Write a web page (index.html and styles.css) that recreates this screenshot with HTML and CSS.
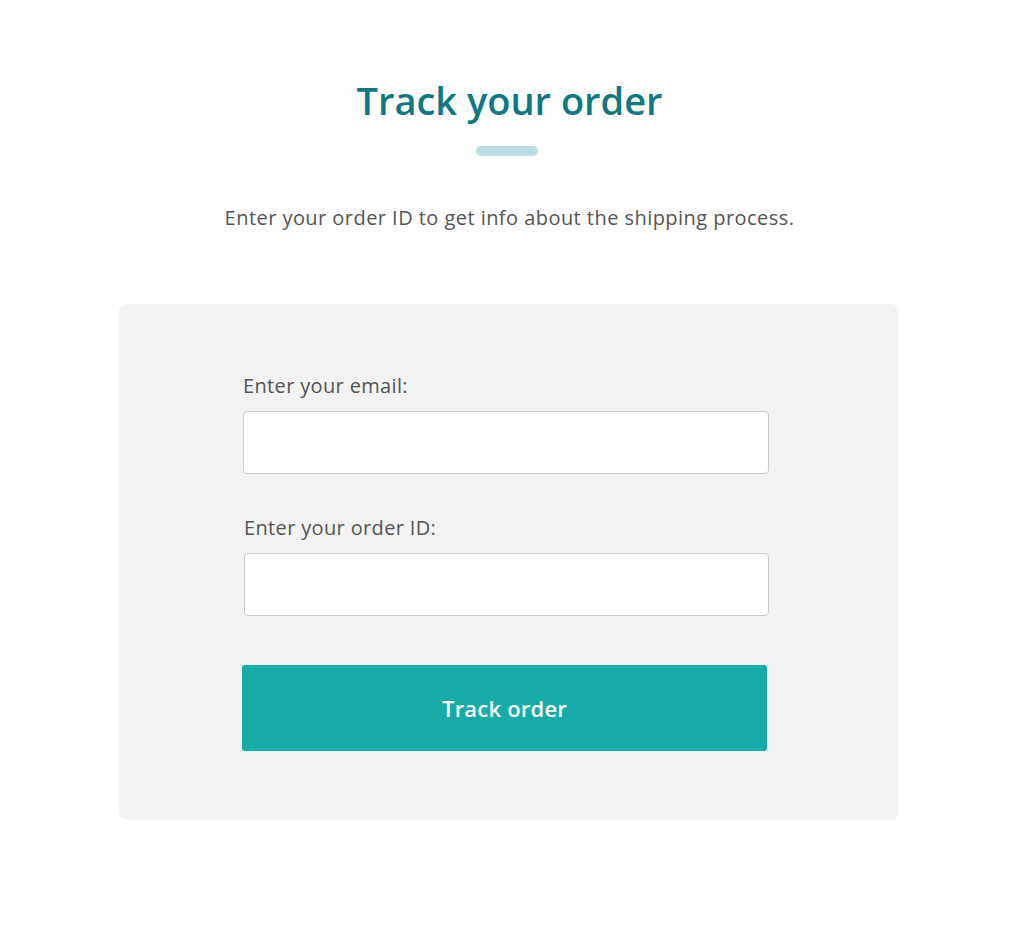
FILE: index.html
```html
<!DOCTYPE html>
<html lang="en">
<head>
    <meta charset="UTF-8">
    <meta name="viewport" content="width=device-width, initial-scale=1.0">
    <title>Track your order</title>
    <link rel="stylesheet" href="styles.css">
</head>
<body>

    <header class="page-head">
        <h1>Track your order</h1>
        <span class="head-bar"></span>
        <p>Enter your order ID to get info about the shipping process.</p>
    </header>

    <!-- Tracking form -->
    <div class="card">
        <form class="track-form" onsubmit="return false;">
            <div class="form-group">
                <label for="email">Enter your email:</label>
                <input type="email" id="email">
            </div>
            <div class="form-group shifted">
                <label for="orderId">Enter your order ID:</label>
                <input type="text" id="orderId">
            </div>
            <button type="submit">Track order</button>
        </form>
    </div>

</body>
</html>
```

FILE: styles.css
```css
body {
    font-family: 'Open Sans', 'Noto Sans', sans-serif;
    background: #ffffff;
    margin: 0;
    padding: 0;
    color: #505050;
}

.page-head {
    text-align: center;
    padding: 74px 5px 0 0;
}

.page-head h1 {
    font-size: 38px;
    font-weight: 600;
    line-height: 52px;
    color: #0e7883;
    margin: 0;
}

.head-bar {
    display: block;
    width: 62px;
    height: 10px;
    margin: 20px auto 0;
    border-radius: 5px;
    background: #bcdfe3;
    transform: translateX(-3px);
}

.page-head p {
    font-size: 20px;
    letter-spacing: 0.45px;
    line-height: 24px;
    margin: 50px 0 0;
    color: #555555;
}

.card {
    width: 780px;
    height: 516px;
    margin: 74px 0 0 119px;
    background: #f3f3f3;
    border-radius: 8px;
    box-sizing: border-box;
    padding: 70px 0 0 124px;
}

.track-form {
    width: 526px;
}

.form-group {
    margin-bottom: 42px;
}

.form-group.shifted {
    padding-left: 1px;
    margin-bottom: 49px;
}

label {
    display: block;
    font-size: 20px;
    letter-spacing: 0.35px;
    line-height: 24px;
    margin-bottom: 13px;
    color: #555555;
}

input {
    display: block;
    width: 100%;
    height: 63px;
    box-sizing: border-box;
    border: 1px solid #cccccc;
    border-radius: 4px;
    background: #ffffff;
    font-size: 18px;
    padding: 0 14px;
}

input:focus {
    outline: none;
    border-color: #17aba8;
}

button {
    display: block;
    width: 525px;
    height: 86px;
    margin-left: -1px;
    background: #17aba8;
    color: #ffffff;
    font-family: inherit;
    font-size: 22px;
    font-weight: 600;
    letter-spacing: 0.2px;
    border: none;
    border-radius: 3px;
    cursor: pointer;
}

button:hover {
    background: #149c99;
}
```
